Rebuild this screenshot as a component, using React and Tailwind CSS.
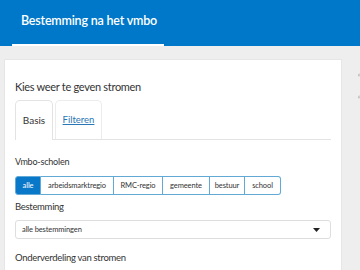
export default function App() {
  const groups = [
    { label: 'alle', w: 'w-[26px]' },
    { label: 'arbeidsmarktregio', w: 'w-[73px]' },
    { label: 'RMC-regio', w: 'w-[49px]' },
    { label: 'gemeente', w: 'w-[47px]' },
    { label: 'bestuur', w: 'w-[35px]' },
    { label: 'school', w: 'w-[36px]' },
  ];

  return (
    <div className="w-[360px] h-[270px] overflow-hidden bg-[#eeeeee] text-[#333333] font-['Lato',sans-serif]">
      {/* Header */}
      <div className="h-[46px] bg-[#0078c9] flex items-end">
        <div className="ml-[12px] w-[152px] h-[46px] border-b-2 border-white flex items-center pl-[9px] pb-[1px]">
          <span className="text-white text-[12.5px] font-semibold tracking-[-0.2px] whitespace-nowrap">Bestemming na het vmbo</span>
        </div>
      </div>

      <div className="flex pt-[13px] pl-[4px]">
        {/* Card */}
        <div className="w-[338px] h-[230px] shrink-0 bg-white border border-[#e6e6e6] pl-[10px] pr-[10px] pt-[19px]">
          <div className="text-[11px] leading-[16px] tracking-[-0.3px] whitespace-nowrap">Kies weer te geven stromen</div>

          {/* Tabs */}
          <div className="mt-[5px] flex gap-[2px] border-b border-[#e3e3e3] h-[40px]">
            <div className="w-[38px] h-[40px] bg-white border border-b-0 border-[#e3e3e3] rounded-t-[5px] flex items-center justify-center text-[10px]">
              Basis
            </div>
            <div className="w-[47px] h-[39px] border border-b-0 border-[#ececec] rounded-t-[5px] flex items-center justify-center text-[9.5px] text-[#2a77b5] underline">
              Filteren
            </div>
          </div>

          <div className="mt-[15px] text-[9px] leading-[14px] tracking-[-0.2px]">Vmbo-scholen</div>

          {/* Button group */}
          <div className="mt-[7px] flex h-[19px]">
            {groups.map((g, i) => (
              <div
                key={g.label}
                className={`${g.w} h-[19px] flex items-center justify-center text-[7.5px] tracking-[-0.1px] whitespace-nowrap border-y border-r border-[#62a9d6] ${
                  i === 0 ? 'bg-[#0a78c8] text-white border-l rounded-l-[3px] border-[#0a78c8]' : 'bg-white text-[#333333]'
                } ${i === groups.length - 1 ? 'rounded-r-[3px]' : ''}`}
              >
                {g.label}
              </div>
            ))}
          </div>

          <div className="mt-[5px] text-[9.5px] leading-[14px] tracking-[-0.3px]">Bestemming</div>

          {/* Select */}
          <div className="mt-[6px] w-[316px] h-[19px] border border-[#dedede] rounded-[3px] flex items-center pl-[6px] pr-[10px]">
            <span className="text-[7.5px] tracking-[-0.1px]">alle bestemmingen</span>
            <svg className="ml-auto" width="7" height="4" viewBox="0 0 7 4">
              <path d="M0 0 H7 L3.5 4 Z" fill="#222" />
            </svg>
          </div>

          <div className="mt-[12px] text-[9.5px] leading-[14px] tracking-[-0.3px]">Onderverdeling van stromen</div>
        </div>

        {/* Next column, mostly off-screen */}
        <div className="ml-[16px] shrink-0 pt-[8px] text-[9px] text-[#888888] leading-[22px]">
          <div>‘</div>
          <div>‘</div>
        </div>
      </div>
    </div>
  );
}
